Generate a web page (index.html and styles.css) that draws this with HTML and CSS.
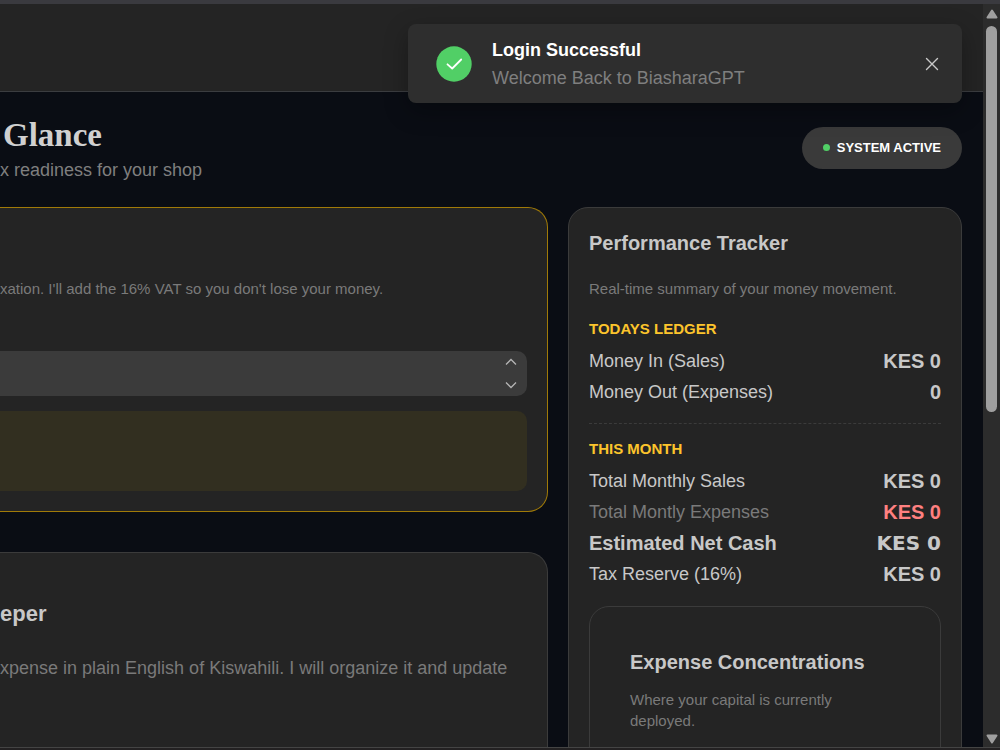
FILE: index.html
```html
<!DOCTYPE html>
<html lang="en">
<head>
    <meta charset="UTF-8">
    <title>BiasharaGPT</title>
    <link rel="stylesheet" href="styles.css">
</head>
<body>
    <div class="viewport">
        <div class="page">
            <header class="navbar"></header>
            <main class="main">
                <div class="page-head">
                    <div class="page-title">
                        <h1>Glance</h1>
                        <p>x readiness for your shop</p>
                    </div>
                    <span class="status"><span class="dot"></span>SYSTEM ACTIVE</span>
                </div>
                <div class="grid">
                    <div class="column">
                        <section class="card card-tax">
                            <p class="small">xation. I'll add the 16% VAT so you don't lose your money.</p>
                            <div class="number-field">
                                <input type="number" id="amount" aria-label="Amount">
                                <div class="steps">
                                    <button type="button" aria-label="Increase" onclick="document.getElementById('amount').stepUp()">
                                        <svg width="12" height="8" viewBox="0 0 12 8"><path d="M1 6.5 6 1.5l5 5"/></svg>
                                    </button>
                                    <button type="button" aria-label="Decrease" onclick="document.getElementById('amount').stepDown()">
                                        <svg width="12" height="8" viewBox="0 0 12 8"><path d="M1 1.5l5 5 5-5"/></svg>
                                    </button>
                                </div>
                            </div>
                            <div class="note"></div>
                        </section>
                        <section class="card card-book">
                            <h2>eper</h2>
                            <p>xpense in plain English of Kiswahili. I will organize it and update</p>
                        </section>
                    </div>
                    <section class="card card-tracker">
                        <h3>Performance Tracker</h3>
                        <p class="small">Real-time summary of your money movement.</p>
                        <h4>TODAYS LEDGER</h4>
                        <table class="ledger">
                            <tr><th scope="row">Money In (Sales)</th><td>KES 0</td></tr>
                            <tr><th scope="row">Money Out (Expenses)</th><td>0</td></tr>
                        </table>
                        <hr>
                        <h4>THIS MONTH</h4>
                        <table class="ledger">
                            <tr><th scope="row">Total Monthly Sales</th><td>KES 0</td></tr>
                            <tr class="expense"><th scope="row">Total Montly Expenses</th><td>KES 0</td></tr>
                            <tr class="net"><th scope="row">Estimated Net Cash</th><td>KES 0</td></tr>
                            <tr><th scope="row">Tax Reserve (16%)</th><td>KES 0</td></tr>
                        </table>
                        <div class="card card-inner">
                            <h3>Expense Concentrations</h3>
                            <p class="small">Where your capital is currently deployed.</p>
                        </div>
                    </section>
                </div>
            </main>
        </div>
        <div class="scrollbar">
            <svg width="12" height="10" viewBox="0 0 12 10"><path d="M6 1.5 10.500 8.500h-9z"/></svg>
            <div class="track"><div class="thumb"></div></div>
            <svg width="12" height="10" viewBox="0 0 12 10"><path d="M6 8.500 10.500 1.500h-9z"/></svg>
        </div>
    </div>

    <div class="toast" role="status">
        <svg class="toast-icon" width="36" height="36" viewBox="0 0 36 36">
            <circle cx="18" cy="18" r="17.700"/>
            <path d="M11.500 18.300l4.700 4.200 9-9"/>
        </svg>
        <div class="toast-text">
            <strong>Login Successful</strong>
            <p>Welcome Back to BiasharaGPT</p>
        </div>
        <button type="button" class="toast-close" aria-label="Close">
            <svg width="14" height="14" viewBox="0 0 14 14"><path d="M1.500 1.500l11 11M12.500 1.500l-11 11"/></svg>
        </button>
    </div>
</body>
</html>
```

FILE: styles.css
```css
* {
    box-sizing: border-box;
}
body {
    margin: 0;
    font-family: "Liberation Sans", Arial, sans-serif;
    font-size: 18px;
    color: #c8c8c8;
    background: #232122;
}
h1, h2, h3, h4, p {
    margin: 0;
}
button {
    padding: 0;
    border: none;
    background: none;
    cursor: pointer;
}
svg {
    display: block;
}

.viewport {
    display: flex;
    height: calc(100vh - 2px);
    overflow: hidden;
    border-top: 4px solid #3a3a3f;
    border-bottom: 1px solid #444;
    background: #0a0d14;
}
.page {
    flex: 1;
    min-width: 0;
    overflow: hidden;
}
.navbar {
    height: 88px;
    background: #242424;
    border-bottom: 1px solid #3b3d40;
}
.main {
    padding: 20px 21px 0 0;
}

.page-head {
    display: flex;
    justify-content: space-between;
    align-items: center;
    margin-bottom: 24px;
}
.page-title {
    color: #7f7f7f;
    line-height: 25px;
}
.page-title h1 {
    padding-left: 3px;
    font-family: "Liberation Serif", "Times New Roman", serif;
    font-size: 33px;
    line-height: 46px;
    color: #d0d0d0;
}
.status {
    display: flex;
    align-items: center;
    gap: 7px;
    padding: 10px 21px;
    border-radius: 21px;
    background: #3a3a3a;
    color: #fff;
    font-size: 13px;
    font-weight: bold;
    line-height: 22px;
}
.dot {
    width: 7px;
    height: 7px;
    border-radius: 50%;
    background: #51cf66;
}

.grid {
    display: grid;
    grid-template-columns: minmax(0, 1fr) 394px;
    gap: 20px;
}
.column {
    display: flex;
    flex-direction: column;
    gap: 40px;
}
.card {
    padding: 20px;
    border: 1px solid #3b3b3b;
    border-radius: 20px;
    background: #242424;
}
.card h3 {
    font-size: 20px;
    line-height: 30px;
}
.small {
    font-size: 15px;
    line-height: 21px;
    color: #7a7a7a;
}

.card-tax {
    padding: 70px 20px 20px 0;
    border-color: #a07a08;
    border-left: none;
    border-radius: 0 20px 20px 0;
}
.number-field {
    display: flex;
    margin: 52px 0 15px;
    height: 45px;
    border-radius: 0 10px 10px 0;
    background: #3b3b3b;
}
.number-field input {
    flex: 1;
    min-width: 0;
    border: none;
    outline: none;
    background: none;
    color: #c8c8c8;
    font: inherit;
    appearance: textfield;
}
.steps {
    display: flex;
    flex-direction: column;
    justify-content: space-between;
    padding: 7px 10px;
}
.steps path {
    fill: none;
    stroke: #b5b5b5;
    stroke-width: 1.3;
}
.note {
    height: 80px;
    border-radius: 0 10px 10px 0;
    background: #322f20;
}
.card-book {
    flex: 1;
    padding: 44px 20px 20px 0;
    border-left: none;
    border-radius: 0 20px 0 0;
}
.card-book h2 {
    margin-bottom: 24px;
    font-size: 22px;
    line-height: 34px;
}
.card-book p {
    line-height: 26px;
    white-space: nowrap;
    color: #7a7a7a;
}

.card-tracker h3 {
    margin-bottom: 20px;
}
.card h4 {
    margin: 20px 0 6px;
    font-size: 15px;
    line-height: 20px;
    color: #fcc42c;
}
.ledger {
    width: 100%;
    border-collapse: collapse;
}
.ledger th,
.ledger td {
    height: 31px;
    padding: 0;
    line-height: 24px;
}
.ledger th {
    font-weight: normal;
    text-align: left;
}
.ledger td {
    font-size: 20px;
    font-weight: bold;
    text-align: right;
}
.ledger .expense th {
    color: #7a7a7a;
}
.ledger .expense td {
    color: #ff8080;
}
.ledger .net th {
    font-size: 20px;
    font-weight: bold;
}
.ledger .net td {
    font-family: "Arial Black", "DejaVu Sans", sans-serif;
    font-weight: 900;
}
.card hr {
    margin: 16px 0 15px;
    border: none;
    border-top: 1px dashed #3b3b3b;
}
.card hr + h4 {
    margin-top: 0;
}
.card-inner {
    margin-top: 17px;
    padding: 40px;
}
.card-inner h3 {
    margin-bottom: 12px;
}

.scrollbar {
    display: flex;
    flex-direction: column;
    align-items: center;
    gap: 7px;
    width: 17px;
    padding: 5px 0 3px;
    background: #2c2c2c;
}
.scrollbar path {
    fill: #9f9f9f;
    stroke: #9f9f9f;
    stroke-width: 2;
    stroke-linejoin: round;
}
.track {
    flex: 1;
    width: 11px;
}
.thumb {
    height: 55%;
    border-radius: 6px;
    background: #9f9f9f;
}

.toast {
    position: absolute;
    top: 24px;
    right: 38px;
    display: flex;
    align-items: center;
    gap: 20px;
    width: 554px;
    max-width: 90%;
    padding: 12px 22px 11px 28px;
    border-radius: 8px;
    background: #2e2e2e;
    box-shadow: 0 8px 24px rgba(0, 0, 0, 0.3);
}
.toast-icon circle {
    fill: #51cf66;
}
.toast-icon path,
.toast-close path {
    fill: none;
    stroke: #fff;
    stroke-width: 1.8;
    stroke-linecap: round;
    stroke-linejoin: round;
}
.toast-close {
    padding: 1px;
}
.toast-close path {
    stroke: #c8c8c8;
    stroke-width: 1.4;
}
.toast-text {
    flex: 1;
    line-height: 28px;
    color: #7f7f7f;
}
.toast-text strong {
    color: #fff;
}
```
